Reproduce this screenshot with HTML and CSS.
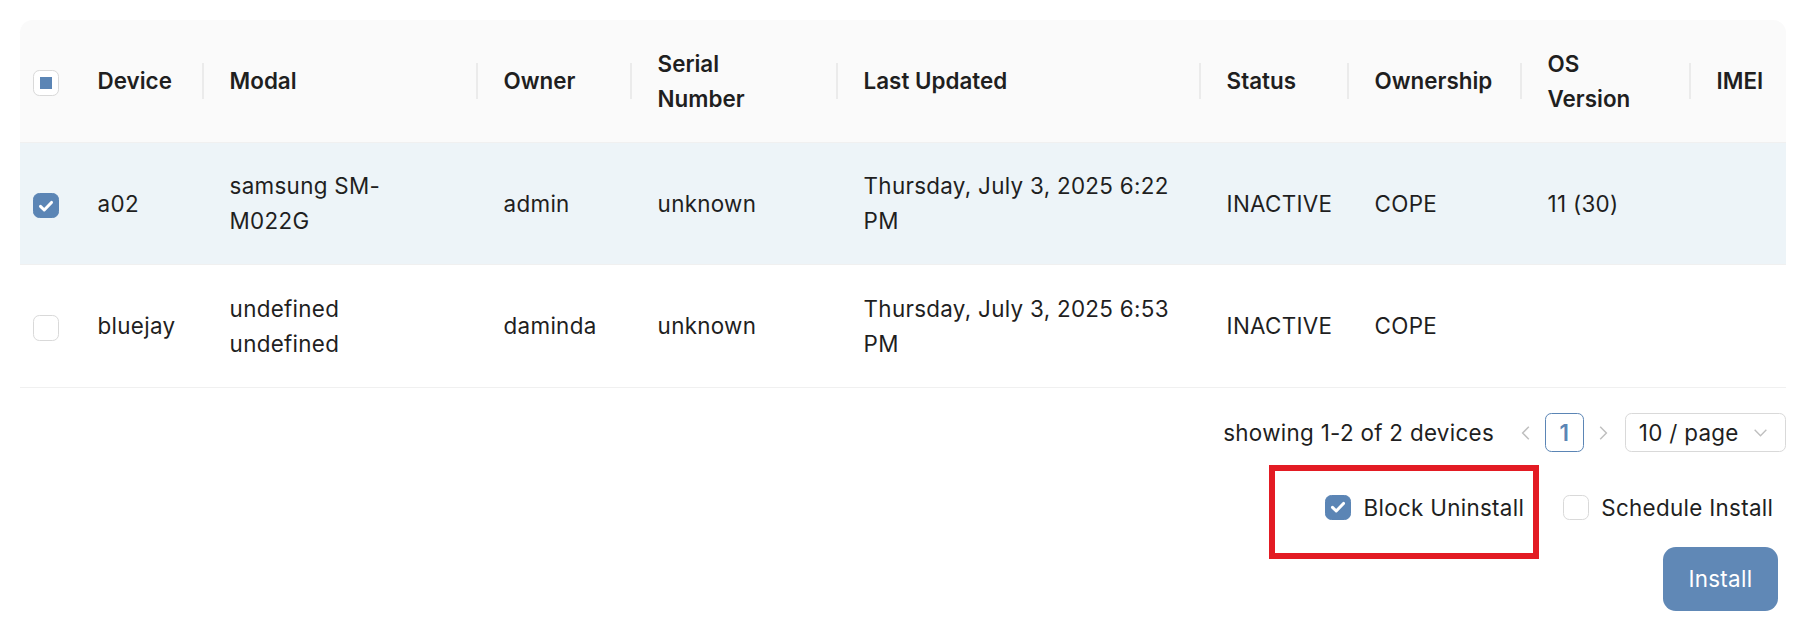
FILE: index.html
```html
<!DOCTYPE html>
<html lang="en">
<head>
    <meta charset="UTF-8">
    <meta name="viewport" content="width=device-width, initial-scale=1.0">
    <title>Devices</title>
    <link rel="stylesheet" href="styles.css">
</head>
<body>
    <div class="page">
        <table class="device-table">
            <colgroup>
                <col class="col-select">
                <col class="col-device">
                <col class="col-modal">
                <col class="col-owner">
                <col class="col-serial">
                <col class="col-updated">
                <col class="col-status">
                <col class="col-ownership">
                <col class="col-os">
                <col class="col-imei">
            </colgroup>
            <thead>
                <tr>
                    <th class="select-cell"><span class="checkbox indeterminate"></span></th>
                    <th class="divided">Device</th>
                    <th class="divided">Modal</th>
                    <th class="divided">Owner</th>
                    <th class="divided">Serial<br>Number</th>
                    <th class="divided">Last Updated</th>
                    <th class="divided">Status</th>
                    <th class="divided">Ownership</th>
                    <th class="divided">OS<br>Version</th>
                    <th>IMEI</th>
                </tr>
            </thead>
            <tbody>
                <tr class="selected">
                    <td class="select-cell">
                        <span class="checkbox checked">
                            <svg viewBox="0 0 16 16"><path d="M4 8.3l2.7 2.6L12 5.4" /></svg>
                        </span>
                    </td>
                    <td>a02</td>
                    <td>samsung SM-M022G</td>
                    <td>admin</td>
                    <td>unknown</td>
                    <td>Thursday, July 3, 2025 6:22 PM</td>
                    <td>INACTIVE</td>
                    <td>COPE</td>
                    <td>11 (30)</td>
                    <td></td>
                </tr>
                <tr>
                    <td class="select-cell"><span class="checkbox"></span></td>
                    <td>bluejay</td>
                    <td>undefined undefined</td>
                    <td>daminda</td>
                    <td>unknown</td>
                    <td>Thursday, July 3, 2025 6:53 PM</td>
                    <td>INACTIVE</td>
                    <td>COPE</td>
                    <td></td>
                    <td></td>
                </tr>
            </tbody>
        </table>

        <div class="footer">
            <div class="pagination">
                <span class="total">showing 1-2 of 2 devices</span>
                <span class="page-arrow">
                    <svg viewBox="0 0 16 16"><path d="M10.5 2.5L5 8l5.5 5.5" /></svg>
                </span>
                <span class="page-item active">1</span>
                <span class="page-arrow">
                    <svg viewBox="0 0 16 16"><path d="M5.5 2.5L11 8l-5.5 5.5" /></svg>
                </span>
                <span class="page-size">
                    10 / page
                    <svg viewBox="0 0 16 16"><path d="M2.5 5.5L8 11l5.5-5.5" /></svg>
                </span>
            </div>

            <div class="options">
                <label class="option highlight">
                    <span class="checkbox checked">
                        <svg viewBox="0 0 16 16"><path d="M4 8.3l2.7 2.6L12 5.4" /></svg>
                    </span>
                    <span class="option-label">Block Uninstall</span>
                </label>
                <label class="option">
                    <span class="checkbox"></span>
                    <span class="option-label">Schedule Install</span>
                </label>
            </div>

            <button class="install-btn">Install</button>
        </div>
    </div>
</body>
</html>
```

FILE: styles.css
```css
body {
    margin: 0;
    font-family: Inter, "Open Sans", sans-serif;
    font-size: 22.4px;
    line-height: 35.2px;
    letter-spacing: 0.3px;
    color: #1f1f1f;
    background: #ffffff;
}
.page {
    padding: 20px 14px 0 20px;
}

/* table */
.device-table {
    width: 100%;
    table-layout: fixed;
    border-collapse: separate;
    border-spacing: 0;
}
.col-select { width: 52px; }
.col-device { width: 132px; }
.col-modal { width: 274px; }
.col-owner { width: 154px; }
.col-serial { width: 206px; }
.col-updated { width: 363px; }
.col-status { width: 148px; }
.col-ownership { width: 173px; }
.col-os { width: 169px; }
.col-imei { width: auto; }

th, td {
    padding: 25.6px;
    text-align: left;
    vertical-align: middle;
    border-bottom: 1.6px solid #f0f0f0;
}
th {
    position: relative;
    background: #fafafa;
    font-weight: 600;
    letter-spacing: 0;
    white-space: nowrap;
}
th:first-child { border-top-left-radius: 12.8px; }
th:last-child { border-top-right-radius: 12.8px; }
th.divided::before {
    content: "";
    position: absolute;
    right: 0;
    top: 50%;
    width: 1.6px;
    height: 36px;
    transform: translateY(-50%);
    background: rgba(0, 0, 0, 0.06);
}
td {
    font-weight: 400;
}
.select-cell {
    padding: 0;
    text-align: center;
}
tr.selected td {
    background: #edf4f8;
}

/* checkbox */
.checkbox {
    display: inline-flex;
    align-items: center;
    justify-content: center;
    box-sizing: border-box;
    width: 25.6px;
    height: 25.6px;
    border: 1.6px solid #d9d9d9;
    border-radius: 6.4px;
    background: #ffffff;
    vertical-align: middle;
}
.checkbox.checked {
    background: #5b85b5;
    border-color: #5b85b5;
}
.checkbox svg {
    width: 22px;
    height: 22px;
    fill: none;
    stroke: #ffffff;
    stroke-width: 2.2;
    stroke-linecap: round;
    stroke-linejoin: round;
}
.checkbox.indeterminate::after {
    content: "";
    width: 12.8px;
    height: 12.8px;
    background: #5b85b5;
}

/* footer */
.footer {
    display: flex;
    flex-direction: column;
    align-items: flex-end;
}
.pagination {
    display: flex;
    align-items: center;
    height: 38.4px;
    margin-top: 25.6px;
}
.total {
    margin-right: 12.8px;
}
.page-arrow,
.page-item {
    display: flex;
    align-items: center;
    justify-content: center;
    box-sizing: border-box;
    width: 38.4px;
    height: 38.4px;
}
.page-arrow svg {
    width: 18px;
    height: 18px;
    fill: none;
    stroke: #bfbfbf;
    stroke-width: 1.3;
}
.page-item.active {
    border: 1.6px solid #5b85b5;
    border-radius: 6.4px;
    color: #5b85b5;
    font-weight: 600;
}
.page-size {
    display: flex;
    align-items: center;
    justify-content: space-between;
    box-sizing: border-box;
    width: 161px;
    height: 38.4px;
    margin-left: 3px;
    padding: 0 16px 0 12.8px;
    border: 1.6px solid #d9d9d9;
    border-radius: 6.4px;
}
.page-size svg {
    width: 17px;
    height: 17px;
    fill: none;
    stroke: #bfbfbf;
    stroke-width: 1.3;
}

.options {
    display: flex;
    gap: 26px;
    margin-top: 38px;
}
.option {
    position: relative;
    display: flex;
    align-items: center;
}
.option-label {
    padding: 0 12.8px;
}
.highlight::after {
    content: "";
    position: absolute;
    left: -56px;
    right: -2px;
    top: -25px;
    bottom: -34px;
    border: 6px solid #e31b23;
}

.install-btn {
    height: 64px;
    margin-top: 22px;
    margin-right: 8px;
    padding: 0 25.6px;
    border: none;
    border-radius: 12.8px;
    background: #6088b6;
    color: #ffffff;
    font-family: inherit;
    font-size: 22.4px;
    letter-spacing: 0.3px;
}
```
